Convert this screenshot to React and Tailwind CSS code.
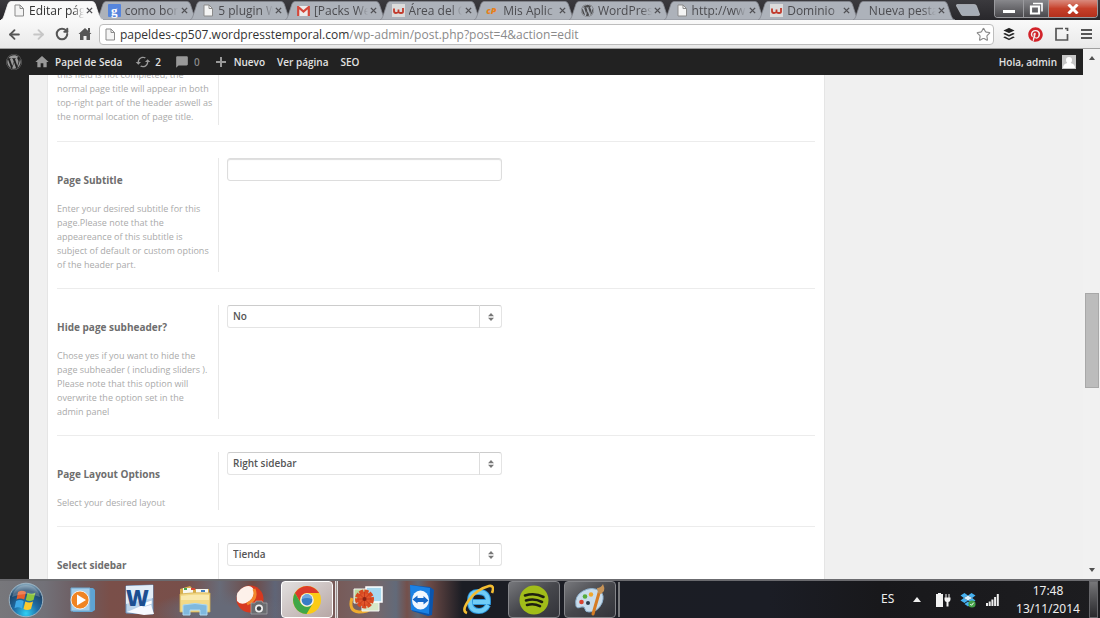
import { FaWordpress, FaBuffer, FaPinterest } from "react-icons/fa";
import { MdHome, MdSync, MdModeComment } from "react-icons/md";
import { Star, ArrowLeft, ArrowRight, RotateCw } from "lucide-react";

const TABS = [
  { title: "Editar pág", icon: "page", active: true },
  { title: "como bor", icon: "google" },
  { title: "5 plugin W", icon: "page" },
  { title: "[Packs We", icon: "gmail" },
  { title: "Área del C", icon: "webempresa" },
  { title: "Mis Aplic", icon: "cpanel" },
  { title: "WordPres", icon: "wordpress" },
  { title: "http://ww", icon: "page" },
  { title: "Dominio", icon: "webempresa" },
  { title: "Nueva pesta", icon: null },
];

const FIELDS = [
  {
    id: "subtitle",
    label: "Page Subtitle",
    help: ["Enter your desired subtitle for this", "page.Please note that the", "appeareance of this subtitle is", "subject of default or custom options", "of the header part."],
  },
  {
    id: "subheader",
    label: "Hide page subheader?",
    help: ["Chose yes if you want to hide the", "page subheader ( including sliders ).", "Please note that this option will", "overwrite the option set in the", "admin panel"],
    options: ["No", "Yes"],
  },
  {
    id: "layout",
    label: "Page Layout Options",
    help: ["Select your desired layout"],
    options: ["Right sidebar", "Left sidebar"],
  },
  {
    id: "sidebar",
    label: "Select sidebar",
    help: [],
    options: ["Tienda"],
  },
];

export default function App() {
  return (
    <div className="flex h-screen flex-col overflow-hidden bg-[#f0f0f0] font-['Open_Sans','Noto_Sans',sans-serif]">
      <TabStrip />
      <Toolbar />
      <div className="flex min-h-0 flex-1">
        <div className="flex min-w-0 flex-1 flex-col">
          <AdminBar />
          <div className="flex min-h-0 flex-1">
            <nav className="w-[29px] shrink-0 bg-[#222]" />
            <main className="min-w-0 flex-1 overflow-hidden pl-[18px] pr-[258px]">
              <OptionsPanel />
            </main>
          </div>
        </div>
        <Scrollbar />
      </div>
      <Taskbar />
    </div>
  );
}

/* Browser chrome */

function TabStrip() {
  return (
    <header className="flex h-5 shrink-0 items-end bg-gradient-to-b from-[#3b3a3e] to-[#28272b]">
      <div className="grid w-[86.5%] shrink-0 grid-cols-10 pl-[5px]">
        {TABS.map((tab, i) => (
          <Tab key={i} tab={tab} />
        ))}
      </div>
      <button aria-label="Nueva pestaña" className="mb-1 ml-1 h-3 w-6">
        <svg viewBox="0 0 24 12" className="h-3 w-6">
          <path d="M1 0.5h17.5q1.5 0 2 1.5l3 8q.4 1.500-1 1.500H7q-1.500 0-2-1.500L.5 2Q0 .5 1 .5z" fill="#a6acb5" stroke="#c9ccd2" strokeWidth=".6" />
        </svg>
      </button>
      <WindowButtons />
    </header>
  );
}

function Tab({ tab }) {
  return (
    <div className={`relative h-[19px] min-w-0 ${tab.active ? "z-10" : ""}`}>
      <svg viewBox="0 0 103 19" preserveAspectRatio="none" className="absolute -left-1 top-0 h-[19px] w-[108%] max-w-none">
        <path
          d="M0 19Q2 18.500 3 15L7 3Q8 .5 10 .5H92Q94 .5 95 3L99 15Q100 18.500 103 19z"
          fill={tab.active ? "#f9f9f9" : "#adb2ba"}
          stroke={tab.active ? "#f9f9f9" : "#85888f"}
          strokeWidth=".8"
        />
      </svg>
      <div className={`relative flex h-full items-center gap-1 pr-1 ${tab.icon ? "pl-2" : "pl-3"}`}>
        {tab.icon && <Favicon name={tab.icon} />}
        <span
          className={`-mr-1 min-w-0 flex-1 overflow-hidden whitespace-nowrap text-xs [mask-image:linear-gradient(to_right,black_80%,transparent)] ${
            tab.active ? "text-[#333]" : "text-[#4c4c50]"
          }`}
        >
          {tab.title}
        </span>
        <button aria-label="Cerrar pestaña" className="flex w-3 shrink-0 justify-center">
          <svg viewBox="0 0 8 8" className="size-[7px]">
            <path d="M1 1l6 6M7 1L1 7" stroke="#505054" strokeWidth="1.6" />
          </svg>
        </button>
      </div>
    </div>
  );
}

function Favicon({ name }) {
  switch (name) {
    case "google":
      return <span className="flex size-[13px] shrink-0 items-center justify-center rounded-[1px] bg-[#5585dd] pb-px font-['Liberation_Serif',serif] text-[13px] font-bold leading-none text-white">g</span>;
    case "gmail":
      return (
        <svg viewBox="0 0 13 10" className="h-[10px] w-[13px] shrink-0">
          <path d="M1 0h11v10H1z" fill="#ececec" />
          <path d="M1.200 10V1l5.300 4.500L11.800 1v9" fill="none" stroke="#d5473a" strokeWidth="2.200" />
        </svg>
      );
    case "webempresa":
      return (
        <svg viewBox="0 0 13 13" className="size-[13px] shrink-0">
          <path d="M0 0h13v13H0z" fill="#dcdcdc" />
          <path d="M2 4.500v2.500Q2 9 4 9T6.500 7.500V5.500 7.500Q6.500 9 9 9T11 7V4" fill="none" stroke="#c1392b" strokeWidth="1.800" />
        </svg>
      );
    case "cpanel":
      return <span className="w-[13px] shrink-0 text-[9px] font-extrabold italic leading-none text-[#e5801c]">cP</span>;
    case "wordpress":
      return <FaWordpress className="size-[13px] shrink-0 text-[#4a4a4c]" />;
    default:
      return <PageIcon />;
  }
}

function PageIcon() {
  return (
    <svg viewBox="0 0 12 13" className="h-[13px] w-3 shrink-0">
      <path d="M2 1h5l3.500 3.500V12H2z" fill="#f4f4f4" stroke="#8b8b8b" />
      <path d="M7 1v3.500h3.500" fill="none" stroke="#8b8b8b" />
    </svg>
  );
}

function WindowButtons() {
  return (
    <div className="ml-auto mr-[2px] flex h-[18px] shrink-0 self-start overflow-hidden rounded-b border border-t-0 border-[#9a9a9e]">
      <button aria-label="Minimizar" className="flex w-[28px] items-end justify-center bg-gradient-to-b from-[#88888c] to-[#4a494d] pb-1">
        <span className="h-[3px] w-3 bg-white" />
      </button>
      <button aria-label="Restaurar" className="flex w-[26px] items-center justify-center border-x border-[#9a9a9e] bg-gradient-to-b from-[#88888c] to-[#4a494d]">
        <svg viewBox="0 0 14 13" className="h-[13px] w-[14px]">
          <path d="M4 1.500h9v8" fill="none" stroke="#fff" strokeWidth="1.600" />
          <path d="M2 4.500h8v7H2z" fill="none" stroke="#fff" strokeWidth="2.200" />
        </svg>
      </button>
      <button aria-label="Cerrar" className="flex w-[48px] items-center justify-center bg-gradient-to-b from-[#d98a7d] via-[#c6402a] to-[#b3301c]">
        <svg viewBox="0 0 12 10" className="h-[10px] w-3">
          <path d="M1.500 0.500l9 9M10.500 .5l-9 9" stroke="#fff" strokeWidth="3" />
        </svg>
      </button>
    </div>
  );
}

function Toolbar() {
  return (
    <div className="flex h-[29px] shrink-0 items-center border-b border-[#a0a0a0] bg-gradient-to-b from-[#f9f9f9] to-[#e9e9e9] pr-2">
      <div className="flex w-[99px] shrink-0 items-center gap-[9px] pl-[7px] text-[#555]">
        <button aria-label="Atrás"><ArrowLeft className="size-[15px]" strokeWidth={3} /></button>
        <button aria-label="Adelante"><ArrowRight className="size-[15px] text-[#c6c6c6]" strokeWidth={3} /></button>
        <button aria-label="Recargar"><RotateCw className="size-[14px]" strokeWidth={3.5} /></button>
        <button aria-label="Inicio">
          <svg viewBox="0 0 14 14" className="size-[14px]">
            <path d="M7 1l6.500 6H12v6H8.500V9h-3v4H2V7H.5z" fill="#555" />
            <path d="M10 1h2v4h-2z" fill="#555" />
          </svg>
        </button>
      </div>
      <div className="flex h-[21px] min-w-0 flex-1 items-center rounded-sm border border-[#bdbdbd] bg-white pl-1 pr-[2px]">
        <PageIcon />
        <div className="min-w-0 flex-1 pl-1 text-xs leading-[19px] text-[#8a8a8a]">
          <span className="text-[#333]">papeldes-cp507.wordpresstemporal.com</span>/wp-admin/post.php?post=4&amp;action=edit
        </div>
        <Star className="size-[15px] text-[#8a8a8a]" strokeWidth={1.8} />
      </div>
      <div className="flex items-center gap-3 pl-2">
        <FaBuffer className="size-[14px] text-[#222]" />
        <FaPinterest className="size-[15px] text-[#d2232a]" />
        <svg viewBox="0 0 14 14" className="size-[14px]">
          <path d="M8 1.500H1v11.500h11.500V7M10 1.500h2.500V4" fill="none" stroke="#555" strokeWidth="1.700" />
        </svg>
        <button aria-label="Menú" className="flex w-[11px] flex-col gap-[2px]">
          <span className="h-[2px] bg-[#555]" />
          <span className="h-[2px] bg-[#555]" />
          <span className="h-[2px] bg-[#555]" />
        </button>
      </div>
    </div>
  );
}

/* WordPress admin */

function AdminBar() {
  return (
    <div className="flex h-[26px] shrink-0 items-center bg-[#222] pl-[6px] pr-[7px] text-[10px] font-semibold text-[#e2e2e2]">
      <a href="#wp" aria-label="WordPress"><FaWordpress className="size-4 text-[#999]" /></a>
      <a href="#site" className="ml-3 flex items-center gap-[5px]">
        <MdHome className="size-4 text-[#999]" />
        Papel de Seda
      </a>
      <a href="#updates" className="ml-[13px] flex items-center gap-1">
        <MdSync className="size-4 rotate-90 text-[#999]" />
        2
      </a>
      <a href="#comments" className="ml-[14px] flex items-center gap-[5px] text-[#888]">
        <MdModeComment className="size-[14px] -scale-x-100 text-[#999]" />
        0
      </a>
      <a href="#new" className="ml-4 flex items-center gap-2">
        <svg viewBox="0 0 10 10" className="size-[10px]"><path d="M5 0v10M0 5h10" stroke="#999" strokeWidth="2" /></svg>
        Nuevo
      </a>
      <a href="#view" className="ml-3">Ver página</a>
      <a href="#seo" className="ml-3">SEO</a>
      <a href="#profile" className="ml-auto flex items-center gap-[5px]">
        Hola, admin
        <svg viewBox="0 0 14 14" className="size-[14px]">
          <path d="M0 0h14v14H0z" fill="#c6c6c6" />
          <path d="M7 2a3 3 0 0 1 3 3q0 2-1.300 3Q13 9 13 13H1q0-4 4.300-5Q4 7 4 5a3 3 0 0 1 3-3z" fill="#fff" />
        </svg>
      </a>
    </div>
  );
}

function OptionsPanel() {
  return (
    <form className="h-full overflow-hidden border-x border-[#e5e5e5] bg-white px-[9px]">
      <div className="-mt-[7px] border-b border-[#ececec] pb-4">
        <div className="w-[162px] border-r border-[#e8e8e8] pb-px">
          <HelpText lines={["this field is not completed, the", "normal page title will appear in both", "top-right part of the header aswell as", "the normal location of page title."]} />
        </div>
      </div>
      {FIELDS.map((field) => (
        <Field key={field.id} field={field} />
      ))}
    </form>
  );
}

function HelpText({ lines }) {
  return (
    <p className="whitespace-nowrap text-[9px] leading-[14px] text-[#aaa]">
      {lines.map((line) => (
        <span key={line} className="block">{line}</span>
      ))}
    </p>
  );
}

function Field({ field }) {
  return (
    <div className="flex border-b border-[#ececec] py-4">
      <div className="w-[162px] shrink-0 border-r border-[#e8e8e8] pt-3">
        <label htmlFor={field.id} className="mb-3 block text-[10px] font-bold leading-5 text-[#6e6e6e]">
          {field.label}
        </label>
        <HelpText lines={field.help} />
      </div>
      <div className="pl-2">
        {field.options ? (
          <div className="relative w-[275px]">
            <select
              id={field.id}
              className="block h-[23px] w-full appearance-none rounded-[3px] border border-[#e4e4e4] border-t-[#ccc] bg-white pl-[5px] text-[10px] font-semibold text-[#555]"
            >
              {field.options.map((option) => (
                <option key={option}>{option}</option>
              ))}
            </select>
            <span className="pointer-events-none absolute inset-y-0 right-0 flex w-[23px] items-center justify-center border-l border-[#ddd]">
              <svg viewBox="0 0 6 8" className="h-2 w-[6px]">
                <path d="M3 0l3 3.200H0zM3 8l3-3.200H0z" fill="#777" />
              </svg>
            </span>
          </div>
        ) : (
          <input
            id={field.id}
            type="text"
            className="block h-[23px] w-[275px] rounded-[3px] border border-[#ddd] bg-white px-[5px] text-[10px] shadow-[inset_0_1px_1px_#ddd]"
          />
        )}
      </div>
    </div>
  );
}

function Scrollbar() {
  return (
    <div className="flex w-[17px] shrink-0 flex-col items-center justify-between bg-[#f1f1f1] py-[7px]">
      <svg viewBox="0 0 6 4" className="h-1 w-[6px]"><path d="M3 0l3 4H0z" fill="#505050" /></svg>
      <div className="mt-[52px] h-[95px] w-[14px] border border-[#a8a8a8] bg-[#bcbcbc]" />
      <svg viewBox="0 0 6 4" className="h-1 w-[6px]"><path d="M3 4l3-4H0z" fill="#505050" /></svg>
    </div>
  );
}

/* Windows taskbar */

function Taskbar() {
  return (
    <footer className="flex h-[39px] shrink-0 items-stretch border-t-2 border-[#6b6b6f] bg-[radial-gradient(ellipse_16%_60%_at_50%_85%,#666a78_30%,transparent),linear-gradient(90deg,#77777b_0%,#727178_4%,#6d5d62_7%,#7a4f49_10%,#784f4a_17%,#686b78_20%,#704a45_23%,#5f6577_25%,#77504a_28%,#77676a_34%,#626a79_36%,#74504b_37%,#5f6674_38%,#6d4b47_39%,#1b1d24_42%,#1b1d25_70%,#18181b_80%,#1d1d20_100%)] bg-[length:40%_100%,100%_100%] bg-no-repeat font-['Noto_Sans','Open_Sans',sans-serif]">
      <button aria-label="Inicio" className="flex w-[55px] items-center justify-center pr-[3px]"><StartIcon /></button>
      <TaskButton label="Reproductor de Windows Media"><MediaIcon /></TaskButton>
      <TaskButton label="Word"><WordIcon /></TaskButton>
      <TaskButton label="Explorador"><FolderIcon /></TaskButton>
      <TaskButton label="Capturas"><CaptureIcon /></TaskButton>
      <TaskButton label="Chrome" state="active"><ChromeIcon /></TaskButton>
      <TaskButton label="Fotos"><PhotosIcon /></TaskButton>
      <TaskButton label="TeamViewer"><TeamViewerIcon /></TaskButton>
      <TaskButton label="Internet Explorer"><ExplorerIcon /></TaskButton>
      <TaskButton label="Spotify" state="open"><SpotifyIcon /></TaskButton>
      <TaskButton label="Paint" state="open"><PaintIcon /></TaskButton>
      <span className="my-px w-[2px] border-x border-[#77787b]" />
      <Tray />
    </footer>
  );
}

function TaskButton({ label, state, children }) {
  return (
    <>
      <button
        aria-label={label}
        className={`mx-[2px] flex w-[52px] shrink-0 items-center justify-center ${
          state === "active"
            ? "rounded-sm border border-white bg-gradient-to-br from-[#e2e0e0] to-[#b7a7a5]"
            : state === "open"
              ? "rounded-sm border border-[#85868a] bg-gradient-to-br from-[#77787c] via-[#46474c] to-[#33343a]"
              : ""
        }`}
      >
        {children}
      </button>
      {state === "active" && <span className="w-[3px] shrink-0 border-x border-[#e0dede] bg-[#9a9090]" />}
    </>
  );
}

function Tray() {
  return (
    <div className="ml-auto flex shrink-0 items-center text-xs text-[#eee]">
      <span className="w-[32px] pb-[2px]">ES</span>
      <svg viewBox="0 0 8 5" className="h-[5px] w-2"><path d="M4 0l4 5H0z" fill="#eee" /></svg>
      <svg viewBox="0 0 16 16" className="ml-[14px] size-4">
        <path d="M3 1h3v1h2v13H1V2h2z" fill="#f2f2f2" />
        <path d="M11 2v4M14 2v4" stroke="#f2f2f2" />
        <path d="M9.500 5.500h6v2q0 2-2 2.500v4.500h-2V10q-2-.5-2-2.500z" fill="#f2f2f2" />
      </svg>
      <svg viewBox="0 0 16 16" className="ml-[9px] size-4">
        <path d="M4.500 1L8 3.500 3.800 6 .5 3.500zM11.500 1L8 3.500 12.200 6l3.300-2.500zM3.800 6L8 8.500 4.500 11 .5 8.500zM12.200 6L8 8.500l3.500 2.500 4-2.500zM8 9.500l3.500 2.500L8 14.500 4.500 12z" fill="#45b1f0" />
        <path d="M8 3.500L12.200 6 8 8.500 3.800 6z" fill="#d9f1ff" />
        <circle cx="12" cy="12" r="3.600" fill="#43a047" />
        <path d="M10.300 12l1.200 1.300 2.200-2.600" fill="none" stroke="#fff" />
      </svg>
      <svg viewBox="0 0 13 12" className="ml-[10px] h-3 w-[13px]">
        <path d="M0 9h2v3H0zM2.700 7.500h2V12h-2zM5.400 5.500h2V12h-2zM8.100 3h2v9h-2zM10.800 0h2v12h-2z" fill="#eee" />
      </svg>
      <div className="ml-3 flex w-[74px] flex-col items-center text-xs leading-[18px]">
        <span>17:48</span>
        <span>13/11/2014</span>
      </div>
      <button aria-label="Mostrar escritorio" className="ml-1 mr-[2px] h-[37px] w-[9px] border border-[#66666a] bg-gradient-to-b from-[#77777a] to-[#29292c]" />
    </div>
  );
}

function StartIcon() {
  return (
    <svg viewBox="0 0 36 36" className="size-9">
      <defs>
        <radialGradient id="orb" cx=".5" cy=".9" r=".9">
          <stop offset="0" stopColor="#2fd0f5" />
          <stop offset=".4" stopColor="#1f6da6" />
          <stop offset=".75" stopColor="#1d4468" />
          <stop offset="1" stopColor="#8fb2c6" />
        </radialGradient>
      </defs>
      <circle cx="18" cy="18" r="16.800" fill="url(#orb)" stroke="#9bb3c3" />
      <path d="M10 10q4-2.500 8 0l-1.800 7.500q-4-2-7.700 0z" fill="#e8602c" />
      <path d="M19.500 10.800q4 2 8-.3L25.500 18q-4 2-7.700 0z" fill="#8cc63e" />
      <path d="M8 19q4-2 7.700 0L14 26.500q-4-2.200-7.500-.3z" fill="#3fa9e6" />
      <path d="M17.300 19.600q4 2 7.700 0l-2 7.500q-4 2-7.500 0z" fill="#fcc92c" />
      <path d="M4 15Q7 3 18 3t14 12q-14-6-28 0z" fill="#fff" opacity=".22" />
    </svg>
  );
}

function MediaIcon() {
  return (
    <svg viewBox="0 0 28 28" className="size-7">
      <path d="M5 2h19l2 2v20l-3 2H4z" fill="#5ea4d4" />
      <path d="M2 2h19v23H2z" fill="#a4cdea" stroke="#6fa8d0" />
      <circle cx="11" cy="14" r="9" fill="#f08423" stroke="#fff" strokeWidth=".8" />
      <path d="M8 8.500l9 5.500-9 5.500z" fill="#fff" />
    </svg>
  );
}

function WordIcon() {
  return (
    <svg viewBox="0 0 32 32" className="size-8">
      <path d="M3 2l27-1v29L3 29z" fill="#bad3ea" stroke="#6b91bb" />
      <path d="M3 2l27-1v13L3 20z" fill="#e2edf7" />
      <path d="M4 28l14-6 10-1 3 9-10 1z" fill="#f7faff" />
      <path d="M20 19l9-3v4l-9 3z" fill="#fff" stroke="#9eb7d3" strokeWidth=".5" />
      <text x="3" y="22" fontSize="22" fontWeight="800" fontFamily="Open Sans" fill="#1d4f91">W</text>
    </svg>
  );
}

function FolderIcon() {
  return (
    <svg viewBox="0 0 34 32" className="h-8 w-[34px]">
      <path d="M2 5l10-3 3 3h16v22H2z" fill="#d8ae4b" />
      <path d="M5 4h10v6H5zM18 5h12v6H18z" fill="#f8f8f0" />
      <path d="M6 4h3v2H6z" fill="#4ba54b" /><path d="M13 4h4v2h-4z" fill="#d14836" /><path d="M23 6h4v2h-4z" fill="#3f7fc4" />
      <path d="M2 10q14-2 30-1v19H2z" fill="#f2d987" stroke="#d3b055" strokeWidth=".8" />
      <path d="M3 12q14-2 28-1v5H3z" fill="#f9e9ae" />
      <path d="M5 21q12-3 24 0v10h-7v-5H12v5H5z" fill="#80b9de" stroke="#aed9f2" />
    </svg>
  );
}

function CaptureIcon() {
  return (
    <svg viewBox="0 0 34 32" className="h-8 w-[34px]">
      <circle cx="16" cy="15" r="13.500" fill="#d8391f" />
      <path d="M3 17Q1 7 10 3q7-3 10 3 1 9-8 13-6 2-9-2z" fill="#fdf1ea" />
      <path d="M20 5q4 10-7 15" fill="none" stroke="#f3872c" strokeWidth="3" />
      <path d="M17 19h4l1-2h6l1 2h4v11H17z" fill="#6a6c70" stroke="#b4b5b8" strokeWidth=".6" />
      <circle cx="25" cy="24.500" r="4" fill="#eee" /><circle cx="25" cy="24.500" r="2.200" fill="#3d4045" />
    </svg>
  );
}

function ChromeIcon() {
  return (
    <svg viewBox="0 0 30 30" className="size-[30px]">
      <circle cx="15" cy="15" r="14" fill="#fbcb16" />
      <path d="M2.900 8A14 14 0 0 1 27.100 8H15a7 7 0 0 0-6.500 9.500z" fill="#dc3a2b" />
      <path d="M2.900 8A14 14 0 0 0 14.500 29L20.500 19A7 7 0 0 1 9 18.500z" fill="#3fa648" />
      <circle cx="15" cy="15" r="6.800" fill="#f1f1ee" /><circle cx="15" cy="15" r="5.400" fill="#387cc4" />
      <path d="M10 14a5 5 0 0 1 10 0q-5-2-10 0z" fill="#72a8de" />
    </svg>
  );
}

function PhotosIcon() {
  return (
    <svg viewBox="0 0 34 32" className="h-8 w-[34px]">
      <path d="M3 14q-4 13 7 14 9 0 12-4" fill="none" stroke="#efac2f" strokeWidth="3" />
      <path d="M5 5h17v14H5z" fill="#bcd9a1" stroke="#f6f6f6" /><path d="M13 12h17v15H13z" fill="#d7e8c8" stroke="#f6f6f6" /><path d="M17 3h16v15H17z" fill="#a7d8ee" stroke="#fff" strokeWidth="1.500" />
      <circle cx="15.500" cy="15" r="7.500" fill="#e0562b" strokeDasharray="4 1" stroke="#d94a20" strokeWidth="4" />
      <path d="M15.500 8v14M8.500 15h14M10.500 10l10 10M20.500 10l-10 10" stroke="#c0331b" strokeWidth=".8" />
      <circle cx="15.500" cy="15" r="2" fill="#8b2414" />
    </svg>
  );
}

function TeamViewerIcon() {
  return (
    <svg viewBox="0 0 28 32" className="h-8 w-7">
      <path d="M2 1l20 2 4 3-2 25-4 1L4 27z" fill="#0b55ad" /><path d="M2 1l20 3-1 26L3 26z" fill="#1b82e4" />
      <ellipse cx="12.500" cy="16" rx="8.500" ry="9.500" fill="#f2f8fe" />
      <path d="M4.500 15.500l5-4V14h6v-2l5 4.500-5 4V18h-6v1.500z" fill="#1669c9" />
    </svg>
  );
}

function ExplorerIcon() {
  return (
    <svg viewBox="0 0 32 32" className="size-8">
      <path d="M26 21Q23 27 17 27 8 27 8 17T17 8Q26.500 8 26 18H11" fill="none" stroke="#2c96dc" strokeWidth="6" />
      <path d="M26 21Q23 27 17 27 8 27 8 17T17 8Q26.500 8 26 18H11" fill="none" stroke="#70ccf6" strokeWidth="4" />
      <path d="M5 29Q-1 27 7 16T27 2q6-1 3 7" fill="none" stroke="#f3bd32" strokeWidth="2.600" />
    </svg>
  );
}

function SpotifyIcon() {
  return (
    <svg viewBox="0 0 30 30" className="size-[30px]">
      <circle cx="15" cy="15" r="14.500" fill="#a1bd19" />
      <path d="M6 10.500q10-3 18.500 1.500M7 15.500q8.500-2.500 16 1.500M8 20q7-2 13 1.200" fill="none" stroke="#1e2010" strokeWidth="2.600" strokeLinecap="round" />
    </svg>
  );
}

function PaintIcon() {
  return (
    <svg viewBox="0 0 32 32" className="size-8">
      <path d="M2 22Q0 12 9 7t17 0q5 4 2 12-4 9-13 9-4 0-4-3t-4-2q-4 2-5-1z" fill="#c9ddec" stroke="#8fb2cf" />
      <circle cx="7.500" cy="18" r="2.300" fill="#d94330" /><circle cx="11" cy="12.500" r="2.300" fill="#56ad3b" /><circle cx="17" cy="10.500" r="2.200" fill="#f0a62b" /><circle cx="14" cy="19" r="2" fill="#2d3d4c" />
      <path d="M19 30l6-21" stroke="#d57c25" strokeWidth="3" strokeLinecap="round" />
      <path d="M24 9l-1-5q4 0 6-4 2 4 1 7l-3 3z" fill="#c69357" />
    </svg>
  );
}
